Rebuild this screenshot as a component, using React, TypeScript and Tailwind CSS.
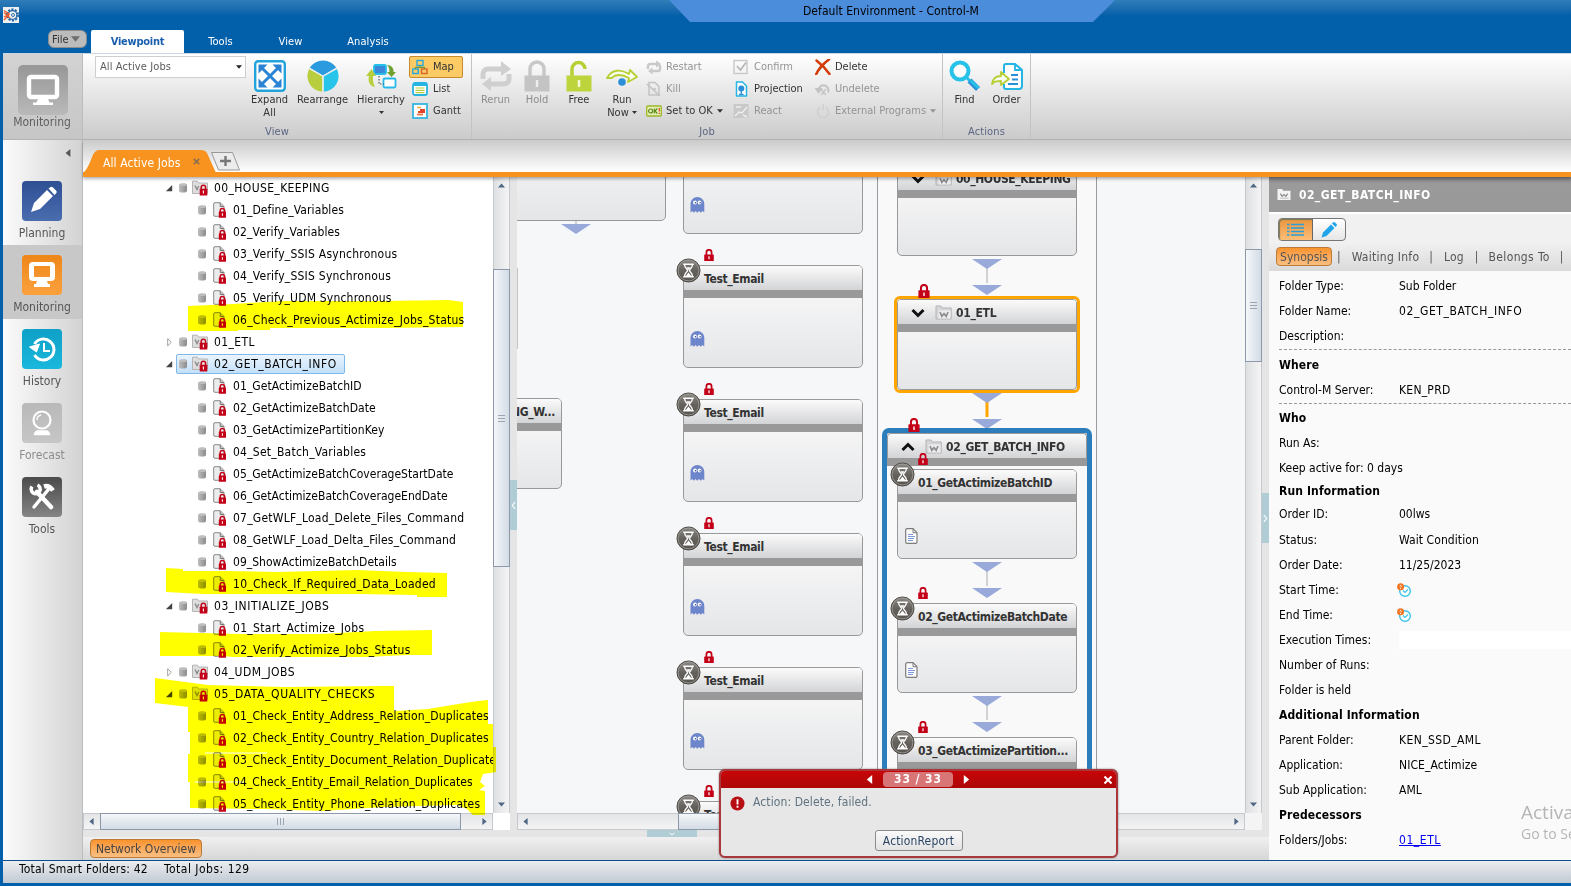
import React from 'react';

type Box = { className?: string };

/* ---------- small icons ---------- */

const Lock = ({ className = '' }: Box) => (
  <svg viewBox="0 0 10 12" className={className}>
    <path d="M2.4 6V3.4a2.6 2.6 0 0 1 5.2 0V6" fill="none" stroke="#c40018" strokeWidth="1.7" />
    <rect x="0.2" y="5.4" width="9.6" height="6.6" rx="0.6" fill="#c40018" />
    <path d="M5 7.2v3" stroke="#fff" strokeWidth="1.2" />
  </svg>
);

const Cylinder = () => (
  <svg viewBox="0 0 8 10" className="h-[10px] w-2 shrink-0">
    <defs>
      <linearGradient id="cyl" x1="0" x2="1">
        <stop offset="0" stopColor="#bdbdbd" />
        <stop offset="1" stopColor="#8c8c8c" />
      </linearGradient>
    </defs>
    <rect x="0" y="0.5" width="8" height="9" rx="2" fill="url(#cyl)" />
    <ellipse cx="4" cy="1.9" rx="3.6" ry="1.2" fill="#bebebe" />
  </svg>
);

const FolderLocked = () => (
  <svg viewBox="0 0 16 16" className="h-4 w-4 shrink-0">
    <path d="M0.5 3V1.2h5L6.5 3H15.5v10.5H0.5z" fill="#dedede" stroke="#b4b4b4" />
    <path d="M3 5.500l2 4 1.800-3.500" fill="none" stroke="#888" strokeWidth="1.300" />
    <path d="M9.200 9V7.500a2.200 2.200 0 0 1 4.400 0V9" fill="none" stroke="#c40018" strokeWidth="1.500" />
    <rect x="7.700" y="8.800" width="7.600" height="6.600" rx="0.500" fill="#c40018" />
    <path d="M11.400 10.600v2.800" stroke="#fff" strokeWidth="1.100" />
  </svg>
);

const DocLocked = () => (
  <svg viewBox="0 0 14 16" className="h-4 w-[14px] shrink-0">
    <path d="M2 0.700h5.200L11 4.500V14.300H2A1.200 1.200 0 0 1 0.700 13V2A1.200 1.200 0 0 1 2 0.700z" fill="#ececec" stroke="#8a8a8a" />
    <path d="M7.200 0.700v3.800H11" fill="#c4c4c4" stroke="#7a7a7a" />
    <path d="M7.200 10V8.600a2.200 2.200 0 0 1 4.400 0V10" fill="none" stroke="#c40018" strokeWidth="1.500" />
    <rect x="5.800" y="9.600" width="7.200" height="6.200" rx="0.500" fill="#c40018" />
    <path d="M9.400 11.200v2.600" stroke="#fff" strokeWidth="1.100" />
  </svg>
);

const FolderW = ({ className = '' }: Box) => (
  <svg viewBox="0 0 17 15" className={className}>
    <path d="M1 3V1h5l1 2h9.2v11H1z" fill="#d6d6d8" stroke="#b4b4b6" />
    <path d="M3.500 5.500h12v8h-12z" fill="#ededef" />
    <path d="M5 7l1.800 4.400L9 8.600l2.200 2.800L13 7" fill="none" stroke="#8f8f8f" strokeWidth="1.700" />
  </svg>
);

const Hourglass = ({ className = '' }: Box) => (
  <svg viewBox="0 0 26 26" className={className}>
    <defs>
      <linearGradient id="hg" x1="0" y1="0" x2="0" y2="1">
        <stop offset="0" stopColor="#8d8a86" />
        <stop offset="0.5" stopColor="#65615c" />
        <stop offset="1" stopColor="#57534e" />
      </linearGradient>
    </defs>
    <circle cx="13" cy="13" r="12" fill="url(#hg)" stroke="#4e4b47" />
    <circle cx="13" cy="13" r="10.8" fill="none" stroke="#a5a29e" strokeWidth="0.8" />
    <path d="M7.500 6.500h11M7.500 19.500h11M9 7c0 4 3 4.500 3 6s-3 2-3 6M17 7c0 4-3 4.500-3 6s3 2 3 6" fill="none" stroke="#fff" strokeWidth="1.400" />
    <path d="M10.600 9.500h4.800L13 12.500zM10 19l3-4 3 4z" fill="#fff" />
  </svg>
);

const Ghost = ({ className = '' }: Box) => (
  <svg viewBox="0 0 15 16" className={className}>
    <path d="M0.500 15.500V6.500a6.800 6.300 0 0 1 13.800 0v9l-1.800-1.500-1.700 1.700-1.800-1.700-1.700 1.700-1.700-1.700-1.700 1.700-1.600-1.700z" fill="#6c85cb" />
    <circle cx="5" cy="5.500" r="1.900" fill="#fff" />
    <circle cx="9.600" cy="5.500" r="1.900" fill="#fff" />
    <circle cx="5.500" cy="5.800" r="0.800" fill="#33498c" />
    <circle cx="10.100" cy="5.800" r="0.800" fill="#33498c" />
  </svg>
);

const DocIcon = ({ className = '' }: Box) => (
  <svg viewBox="0 0 13 16" className={className}>
    <path d="M2 0.700h6l4 4V14a1.300 1.300 0 0 1-1.300 1.300H2A1.300 1.300 0 0 1 0.700 14V2A1.300 1.300 0 0 1 2 0.700z" fill="#fcfcfd" stroke="#7c7c7c" strokeWidth="1.200" />
    <path d="M8 0.700v4h4" fill="none" stroke="#7c7c7c" />
    <path d="M3 6.500h5M3 8.500h7M3 10.500h6M3 12.500h5" stroke="#7d97dc" strokeWidth="1.200" />
  </svg>
);

const Tri = ({ dir, className = '' }: { dir: 'up' | 'down' | 'left' | 'right'; className?: string }) => {
  const d = { up: 'M0 8L5 2l5 6z', down: 'M0 2h10L5 8z', left: 'M8 0v10L2 5z', right: 'M2 0v10l6-5z' }[dir];
  return (
    <svg viewBox="0 0 10 10" className={`shrink-0 ${className}`}>
      <path d={d} fill="currentColor" />
    </svg>
  );
};

/* ---------- title and ribbon ---------- */

const AppLogo = () => (
  <svg viewBox="0 0 16 16" className="h-4 w-4">
    <rect width="16" height="16" fill="#f1f1f1" />
    <circle cx="9.500" cy="8" r="5.700" fill="none" stroke="#1b64a5" strokeWidth="1.600" strokeDasharray="2.200 1.380" />
    <circle cx="9.500" cy="8" r="4.400" fill="none" stroke="#1b64a5" strokeWidth="1.300" />
    <circle cx="10" cy="8" r="1.500" fill="none" stroke="#1b64a5" strokeWidth="0.900" />
    <path d="M1 3.500l5.500 3.500M6.500 7L1 13M1 5.500l6 5.500M1 10l5-3" fill="none" stroke="#ec5a2b" strokeWidth="1.300" />
  </svg>
);

const TitleBar = () => (
  <div className="relative h-[30px]">
    <div className="pt-[7px]"><AppLogo /></div>
    <div className="absolute left-[666px] top-0 h-[22px] w-[446px]">
      <svg viewBox="0 0 446 22" className="absolute inset-0 h-[22px] w-[446px]">
        <path d="M0 0h446l-22 22H21z" fill="#4b8ddb" />
      </svg>
      <div className="relative pr-[2px] text-center leading-[23px] tracking-[0.04px] text-black">Default Environment - Control-M</div>
    </div>
  </div>
);

const RibbonTabs = () => (
  <div className="flex h-[23px] text-[11px] leading-[23px] text-white">
    <div className="ml-[45px] flex h-[18px] w-[39px] items-center gap-[3px] rounded-[6px] border border-[#8d8d8d] bg-[#bcbcbc] pl-[3px] text-[#333]">
      File
      <Tri dir="down" className="h-[10px] w-[9px] text-[#6d6d6d]" />
    </div>
    <div className="ml-1 w-[93px] rounded-t-[2px] bg-white text-center font-bold tracking-[-0.25px] text-[#1a5fae]">Viewpoint</div>
    <div className="w-[73px] text-center tracking-[0.1px]">Tools</div>
    <div className="w-[67px] text-center tracking-[0.1px]">View</div>
    <div className="w-[88px] text-center tracking-[0.1px]">Analysis</div>
  </div>
);

const Big = ({ w, off, lines, children, arrow }: { w: string; off?: boolean; lines: string[]; children: React.ReactNode; arrow?: boolean }) => (
  <div className={`flex flex-col items-center pt-[6px] ${w} ${off ? 'text-[#8c8c8c]' : 'text-[#333]'}`}>
    <div className="mb-px flex h-[32px] items-center justify-center">{children}</div>
    {lines.map((l, i) => (
      <div key={l} className="flex items-center whitespace-nowrap leading-[13px]">
        {l}
        {i > 0 && l === 'Now' && <Tri dir="down" className="ml-[3px] h-[5px] w-[5px]" />}
      </div>
    ))}
    {arrow && <Tri dir="down" className="mt-1 h-[5px] w-[5px]" />}
  </div>
);

const Small = ({ off, label, on, children, arrow, gap = 'gap-1' }: { off?: boolean; on?: boolean; label: string; children: React.ReactNode; arrow?: boolean; gap?: string }) => (
  <div className={`flex h-[22px] items-center whitespace-nowrap border px-[2px] ${gap} ${on ? 'rounded-[2px] border-[#c78a2c] bg-[#fccb66]' : 'border-transparent'} ${off ? 'text-[#949494]' : 'text-[#333]'}`}>
    <svg viewBox="0 0 16 16" className="h-4 w-4 shrink-0">{children}</svg>
    <span className="pt-px">{label}</span>
    {arrow && <Tri dir="down" className="h-[6px] w-[6px]" />}
  </div>
);

const GroupLabel = ({ children }: { children: React.ReactNode }) => (
  <div className="absolute inset-x-0 bottom-0 text-center leading-[14px] tracking-[0.1px] text-[#5b6684]">{children}</div>
);

const Ribbon = () => (
  <div className="flex h-[87px] border-y border-t-[#c9d6e2] border-b-[#b5b5b5] bg-linear-to-b from-white to-[#cbcbcb] text-[11px]">
    <div className="flex w-[80px] flex-col items-center border-r border-[#b9bdc2] bg-linear-to-b from-[#d3d3d3] to-[#c6c6c6] pt-[11px]">
      <div className="flex h-[50px] w-[50px] items-center justify-center rounded-[5px] bg-linear-to-b from-[#979797] to-[#b9b9b9]">
        <svg viewBox="0 0 34 34" className="h-[34px] w-[34px]">
          <rect x="3" y="4" width="28" height="20" rx="2" fill="none" stroke="#fff" strokeWidth="4.400" />
          <path d="M12 26h10l1.500 3.500H27V32H7v-2.500h3.500z" fill="#fff" />
        </svg>
      </div>
      <div className="pr-px text-[12px] leading-[15px] text-[#606060]">Monitoring</div>
    </div>

    <div className="relative flex w-[389px] border-r border-[#c3c3c3]">
      <div className="ml-3 mt-[2px] flex h-[22px] w-[151px] items-center justify-between border border-[#cfcfcf] bg-white pl-1 pr-[3px] text-[#5c5c5c]">
        <span className="tracking-[0.1px]">All Active Jobs</span>
        <Tri dir="down" className="h-[6px] w-[6px] text-[#222]" />
      </div>
      <Big w="w-[47px]" lines={['Expand', 'All']}>
        <svg viewBox="0 0 32 32" className="h-8 w-8">
          <rect x="1.200" y="1.200" width="29.600" height="29.600" rx="3" fill="#fff" stroke="#22a3dc" strokeWidth="2.400" />
          <path d="M8 8l16 16M24 8L8 24" stroke="#2b83d3" strokeWidth="3" />
          <path d="M4.500 4.500h9l-9 9zM27.500 4.500h-9l9 9zM4.500 27.500h9l-9-9zM27.500 27.500h-9l9-9z" fill="#2b83d3" />
        </svg>
      </Big>
      <Big w="w-[59px]" lines={['Rearrange']}>
        <svg viewBox="0 0 32 32" className="h-8 w-8">
          <path d="M16 16L2.600 8A15.700 15.700 0 0 1 29.400 8z" fill="#2b9ade" />
          <path d="M16.600 16.500L29.900 8.900A15.700 15.700 0 0 1 16.600 31.700z" fill="#28c4ea" />
          <path d="M15.400 16.500L2.100 8.900A15.700 15.700 0 0 0 15.400 31.700z" fill="#b9ce3e" />
          <path d="M16 32V16L2.300 8.100M16 16l13.700-7.900" fill="none" stroke="#eee" strokeWidth="1.200" />
        </svg>
      </Big>
      <Big w="w-[58px]" lines={['Hierarchy']} arrow>
        <svg viewBox="0 0 32 32" className="h-8 w-8">
          <rect x="9" y="5" width="12" height="9" rx="1.500" fill="#3b87d8" stroke="#25c0ea" strokeWidth="1.800" />
          <rect x="18.500" y="18.500" width="12" height="9" rx="1.500" fill="#fff" stroke="#25b8ea" strokeWidth="1.800" />
          <path d="M14 16v8h5" fill="none" stroke="#555" strokeWidth="1.200" strokeDasharray="1.500 1.500" />
          <path d="M10 27C5 26 2.500 22 4 16H1l5.500-7L11 16H8c-.5 4 .5 8 2 11z" fill="#b9ce3e" />
          <path d="M22 5c4 0 7 3 6.500 7H31l-4.500 5-4.500-5h2.500c0-3-.5-5-2.500-7z" fill="#6f9f2f" />
        </svg>
      </Big>
      <div className="ml-[-1px] w-[54px] pt-[2px]">
        <Small label="Map" on gap="gap-[5px]">
          <rect x="5" y="1.500" width="6" height="5" fill="none" stroke="#25a8e0" strokeWidth="1.400" />
          <rect x="0.800" y="10" width="5.500" height="4.500" fill="none" stroke="#25a8e0" strokeWidth="1.400" />
          <rect x="9.500" y="10" width="5.500" height="4.500" fill="none" stroke="#d8662b" strokeWidth="1.400" />
          <path d="M8 7v2M3.500 10V8.300h9V10" fill="none" stroke="#7a9a35" strokeWidth="1.200" />
        </Small>
        <Small label="List" gap="gap-[5px]">
          <rect x="1" y="2" width="14" height="12" rx="2" fill="#fff" stroke="#25b4e4" strokeWidth="1.800" />
          <path d="M2 4h12" stroke="#25b4e4" strokeWidth="2" />
          <path d="M3.500 7h9M3.500 9.300h9M3.500 11.600h9" stroke="#b9ce3e" strokeWidth="1.200" />
        </Small>
        <Small label="Gantt" gap="gap-[5px]">
          <rect x="1" y="1" width="14" height="14" fill="#fff" stroke="#35b6e2" strokeWidth="1.800" />
          <path d="M5 4.500h4" stroke="#f5b042" strokeWidth="1.600" />
          <path d="M8 7h5M6 9h7" stroke="#e2432a" strokeWidth="1.800" />
          <path d="M5 11.500h6" stroke="#e8733a" strokeWidth="1.800" />
        </Small>
      </div>
      <GroupLabel>View</GroupLabel>
    </div>

    <div className="relative flex w-[471px] border-r border-[#c3c3c3]">
      <Big w="w-[47px]" off lines={['Rerun']}>
        <svg viewBox="0 0 32 32" className="h-8 w-8">
          <path d="M3 19v-5a5 5 0 0 1 5-5h13M29 14v5a5 5 0 0 1-5 5H10" fill="none" stroke="#cfcfcf" strokeWidth="5" />
          <path d="M21 1l10 8-10 7zM11 17L2 24l9 7z" fill="#cfcfcf" />
        </svg>
      </Big>
      <Big w="w-[36px]" off lines={['Hold']}>
        <svg viewBox="0 0 26 32" className="h-8 w-[26px]">
          <path d="M6 16V9a7 7 0 0 1 14 0v7" fill="none" stroke="#c8c8c8" strokeWidth="3.500" />
          <rect x="0.500" y="15.500" width="25" height="16" fill="#c4c4c4" />
          <path d="M13 20v7" stroke="#eee" strokeWidth="2.500" />
        </svg>
      </Big>
      <Big w="w-[48px]" lines={['Free']}>
        <svg viewBox="0 0 26 32" className="h-8 w-[26px]">
          <path d="M6 16V9a6.500 6.500 0 0 1 13 0" fill="none" stroke="#b7cf34" strokeWidth="3.500" />
          <rect x="0.500" y="15.500" width="25" height="16" fill="#bdd43c" />
          <path d="M13 20v7" stroke="#f4f9d6" strokeWidth="2.500" />
        </svg>
      </Big>
      <Big w="w-[38px]" lines={['Run', 'Now']}>
        <svg viewBox="0 0 34 32" className="h-8 w-[34px]">
          <path d="M2 18C7 9 16 9 24 14l1-4 7 7-9 5 1-4C17 14 10 14 7 18z" fill="#fbfdf0" stroke="#b7cf34" strokeWidth="1.800" strokeLinejoin="round" />
          <circle cx="17" cy="22" r="3.800" fill="#2b8fd8" />
        </svg>
      </Big>
      <div className="ml-[2px] w-[87px] pt-[2px]">
        <Small label="Restart" off>
          <path d="M2 10V7a2 2 0 0 1 2-2h6M14 6v4a2 2 0 0 1-2 2H6" fill="none" stroke="#c9c9c9" strokeWidth="2.400" />
          <path d="M10 1.500l5 3.500-5 3.500zM6.500 8.500L2 12l4.500 3.500z" fill="#c9c9c9" />
        </Small>
        <Small label="Kill" off>
          <path d="M3 1.500h6l4 4V14H3z" fill="none" stroke="#c4c4c4" strokeWidth="1.500" />
          <path d="M1 3l13 12M6 8h4" stroke="#c4c4c4" strokeWidth="1.700" />
        </Small>
        <Small label="Set to OK" arrow>
          <rect x="0.700" y="3" width="14.600" height="10" rx="1" fill="#e6efb4" stroke="#9db82b" strokeWidth="1.300" />
          <circle cx="4.600" cy="8" r="2" fill="none" stroke="#5d8a1c" strokeWidth="1.200" />
          <path d="M8.300 5.500v5M11.300 5.500L9 8l2.300 2.500" fill="none" stroke="#5d8a1c" strokeWidth="1.200" />
          <path d="M13.300 5v3.500M13.300 9.700v1.300" stroke="#e0422a" strokeWidth="1.200" />
        </Small>
      </div>
      <div className="w-[82px] pt-[2px]">
        <Small label="Confirm" off gap="gap-[5px]">
          <rect x="1" y="1.500" width="13" height="13" fill="none" stroke="#c8c8c8" strokeWidth="1.400" />
          <path d="M4 7l3.500 4L13 3.500" fill="none" stroke="#b8b8b8" strokeWidth="1.800" />
        </Small>
        <Small label="Projection" gap="gap-[5px]">
          <path d="M3.500 1h6l4 4v10h-10z" fill="#fff" stroke="#25b4e4" strokeWidth="1.500" strokeLinejoin="round" />
          <circle cx="8.300" cy="7.500" r="3" fill="#2b8fd8" />
          <path d="M8.300 10v4M6 13.500h4.600" stroke="#2b8fd8" strokeWidth="1.300" />
        </Small>
        <Small label="React" off gap="gap-[5px]">
          <rect x="0.500" y="1" width="15" height="14" fill="#c9c9c9" />
          <path d="M2 13l4-4 3 1 5-6M10 12l4 2M3 4h5" fill="none" stroke="#eee" strokeWidth="1.400" />
        </Small>
      </div>
      <div className="w-[124px] pt-[2px]">
        <Small label="Delete">
          <path d="M1.500 1.500C6 5 11 10 14.500 15M14 0.500C9 4 4 9 1 15.500" stroke="#d63c0a" strokeWidth="2.500" strokeLinecap="round" />
        </Small>
        <Small label="Undelete" off>
          <path d="M3.500 9a5 5 0 1 1 9.500 2.500" fill="none" stroke="#c4c4c4" strokeWidth="2" />
          <path d="M0.500 7.500h6L3.500 12zM6 8l5 6M11 8l-5 6" fill="#c4c4c4" stroke="#c4c4c4" strokeWidth="1.200" />
        </Small>
        <Small label="External Programs" off arrow>
          <path d="M5 4.500a5.500 5.500 0 1 0 6 0M8 1v6" fill="none" stroke="#d0d0d0" strokeWidth="1.700" />
        </Small>
      </div>
      <GroupLabel>Job</GroupLabel>
    </div>

    <div className="relative flex w-[88px] border-r border-[#c3c3c3]">
      <Big w="w-[43px]" lines={['Find']}>
        <svg viewBox="0 0 32 32" className="h-8 w-8">
          <circle cx="11" cy="11" r="8.500" fill="#fdfdfd" stroke="#27c2e8" strokeWidth="4" />
          <path d="M18 18l4 4" stroke="#27c2e8" strokeWidth="3" />
          <path d="M20.500 20.500l8.500 8.500" stroke="#2b8fd8" strokeWidth="5.500" />
          <path d="M21.500 20.500l8 7.500" stroke="#27c2e8" strokeWidth="3" />
        </svg>
      </Big>
      <Big w="w-[41px]" lines={['Order']}>
        <svg viewBox="0 0 32 32" className="h-8 w-8">
          <path d="M13 13V6a2 2 0 0 1 2-2h9l7 6v16a3 3 0 0 1-3 3H15a2 2 0 0 1-2-2v-3" fill="#fff" stroke="#25b4e4" strokeWidth="2" />
          <path d="M24 4v6h7" fill="none" stroke="#25b4e4" strokeWidth="1.800" />
          <path d="M20 15h7M21 19.500h6M17 24h10" stroke="#2b8fd8" strokeWidth="1.800" />
          <path d="M1 24c1-7 6-8 9-8v-4l8 7-8 6v-4c-4 0-6 0-9 3z" fill="#fbfdf0" stroke="#b7cf34" strokeWidth="1.800" strokeLinejoin="round" />
        </svg>
      </Big>
      <GroupLabel>Actions</GroupLabel>
    </div>
  </div>
);

/* ---------- navigation rail ---------- */

const railItems: { label: string; tile: string; text: string; active?: boolean; icon: React.ReactNode }[] = [
  {
    label: 'Planning', tile: 'bg-linear-to-b from-[#2f4f93] to-[#4a6db0]', text: 'text-[#555]',
    icon: <path d="M9 31l3-9L25 9l6 6-13 13zM26.500 7.500l1.500-1a2 2 0 0 1 3 0l3 3a2 2 0 0 1 0 3l-1.500 1.500z" fill="#fff" />,
  },
  {
    label: 'Monitoring', tile: 'bg-linear-to-b from-[#ee8618] to-[#fba13c]', text: 'text-[#555]', active: true,
    icon: <path d="M11 7h18a4 4 0 0 1 4 4v11a4 4 0 0 1-4 4h-4l1 3h2v3H12v-3h2l1-3h-4a4 4 0 0 1-4-4V11a4 4 0 0 1 4-4zm1 4v11h16V11z" fill="#fff" fillRule="evenodd" />,
  },
  {
    label: 'History', tile: 'bg-linear-to-b from-[#0fa0c8] to-[#19b8dc]', text: 'text-[#555]',
    icon: (
      <g fill="none" stroke="#fff">
        <path d="M12.500 15a10.500 10.500 0 1 1 0 11" strokeWidth="3" />
        <path d="M22 14v8h6" strokeWidth="2" />
        <path d="M7.500 18l10-3-3 8z" fill="#fff" strokeWidth="1" />
      </g>
    ),
  },
  {
    label: 'Forecast', tile: 'bg-linear-to-b from-[#b9b9b9] to-[#c6c6c6]', text: 'text-[#8c8c8c]',
    icon: (
      <g fill="none" stroke="#fff">
        <circle cx="20" cy="17" r="8.500" strokeWidth="2.200" />
        <path d="M15 17a5 5 0 0 1 4-5" strokeWidth="1.300" />
        <path d="M15 27.500h10q3 1 3 4.500H12q0-3.500 3-4.500z" fill="#fff" strokeWidth="0.500" />
      </g>
    ),
  },
  {
    label: 'Tools', tile: 'bg-linear-to-b from-[#4b4b4b] to-[#858585]', text: 'text-[#555]',
    icon: (
      <g fill="none" stroke="#fff" strokeLinecap="round">
        <path d="M15 15l14 15" strokeWidth="4.500" />
        <path d="M12 30l14-17" strokeWidth="3.500" />
        <path d="M10 9.500a4.500 4.500 0 1 0 5.500-1.500" strokeWidth="3.500" strokeLinecap="butt" />
        <path d="M22 9.500c3-1 6 0 9 4" strokeWidth="4.500" strokeLinecap="butt" />
      </g>
    ),
  },
];

const Rail = () => (
  <div className="flex w-[80px] shrink-0 flex-col border-r border-[#b9bdc2] bg-linear-to-r from-[#fbfbfb] to-[#d3d3d3]">
    <div className="flex h-[31px] justify-end pr-[10px] pt-[8px]">
      <Tri dir="left" className="h-[10px] w-[8px] text-[#555]" />
    </div>
    {railItems.map((r) => (
      <div key={r.label} className={`flex h-[74px] flex-col items-center pr-px pt-[10px] ${r.active ? 'bg-[#c8c8c8]' : ''}`}>
        <svg viewBox="0 0 40 40" className={`h-10 w-10 rounded-[4px] ${r.tile}`}>{r.icon}</svg>
        <div className={`pt-[5px] text-[12px] leading-[15px] ${r.text}`}>{r.label}</div>
      </div>
    ))}
  </div>
);

/* ---------- tab strip ---------- */

const TabStrip = () => (
  <div className="h-[37px] border-b-[5px] border-[#f7931e] bg-linear-to-b from-[#cbcbcb] to-white pt-[10px]">
    <div className="relative flex h-[22px] items-center">
      <svg viewBox="0 0 160 23" className="absolute left-0 top-0 h-[23px] w-[160px]">
        <path d="M0 23C6 18 8 8 11 3q2-3 5-3h102q4 0 6 3l9 20z" fill="#f7931e" />
        <path d="M128.500 2.500h21l7 17.500h-21z" fill="#ececec" stroke="#999" />
        <path d="M137 11h11M142.500 6v10" stroke="#777" strokeWidth="2.400" />
      </svg>
      <span className="relative ml-[20px] mt-[3px] text-[12px] tracking-[0.1px] text-white">All Active Jobs</span>
      <svg viewBox="0 0 8 8" className="relative ml-[13px] h-[7px] w-[7px]"><path d="M1 1l6 6M7 1L1 7" stroke="#8a6f51" strokeWidth="1.800" /></svg>
    </div>
  </div>
);

/* ---------- scroll bars ---------- */

const VScroll = ({ lead, thumb }: { lead: string; thumb: string }) => (
  <div className="flex w-[17px] shrink-0 flex-col items-center border-x border-[#c5c9cd] bg-linear-to-r from-[#dfe0e2] to-[#f4f4f5]">
    <Tri dir="up" className="mt-[5px] h-[7px] w-[7px] text-[#4c6684]" />
    <div className={lead} />
    <div className={`flex w-[17px] shrink-0 flex-col items-center justify-center gap-[2px] border border-[#8b99a8] bg-linear-to-r from-[#f5f7f9] to-[#d3dbe5] ${thumb}`}>
      <div className="h-px w-[7px] bg-[#9aa5b1]" /><div className="h-px w-[7px] bg-[#9aa5b1]" /><div className="h-px w-[7px] bg-[#9aa5b1]" />
    </div>
    <Tri dir="down" className="mb-[5px] mt-auto h-[7px] w-[7px] text-[#4c6684]" />
  </div>
);

const HScroll = ({ lead, thumb, width }: { lead: string; thumb: string; width: string }) => (
  <div className={`flex h-[17px] shrink-0 items-center border border-[#c5c9cd] bg-linear-to-b from-[#e4e5e6] to-[#f4f4f5] ${width}`}>
    <Tri dir="left" className="ml-[4px] h-[7px] w-[7px] text-[#4c6684]" />
    <div className={lead} />
    <div className={`flex h-[17px] shrink-0 items-center justify-center gap-[2px] border border-[#8b99a8] bg-linear-to-b from-[#f5f7f9] to-[#d3dbe5] ${thumb}`}>
      <div className="h-[7px] w-px bg-[#9aa5b1]" /><div className="h-[7px] w-px bg-[#9aa5b1]" /><div className="h-[7px] w-px bg-[#9aa5b1]" />
    </div>
    <Tri dir="right" className="ml-auto mr-[4px] h-[7px] w-[7px] text-[#4c6684]" />
  </div>
);

/* ---------- tree ---------- */

const WIDE = 'tracking-[0.24px]';
const LONG = 'tracking-[0.15px]';
const CAPS = 'tracking-[0.57px]';
const NONE = 'tracking-[0.03px]';

const tree: [string, 'open' | 'closed' | 'job', string][] = [
  ['00_HOUSE_KEEPING', 'open', 'tracking-[0.38px]'],
  ['01_Define_Variables', 'job', 'tracking-[0.1px]'],
  ['02_Verify_Variables', 'job', 'tracking-[0.15px]'],
  ['03_Verify_SSIS Asynchronous', 'job', WIDE],
  ['04_Verify_SSIS Synchronous', 'job', WIDE],
  ['05_Verify_UDM Synchronous', 'job', 'tracking-[0.2px]'],
  ['06_Check_Previous_Actimize_Jobs_Status', 'job', WIDE],
  ['01_ETL', 'closed', 'tracking-[0.4px]'],
  ['02_GET_BATCH_INFO', 'open', CAPS],
  ['01_GetActimizeBatchID', 'job', 'tracking-[0.08px]'],
  ['02_GetActimizeBatchDate', 'job', 'tracking-[0.06px]'],
  ['03_GetActimizePartitionKey', 'job', 'tracking-[0.1px]'],
  ['04_Set_Batch_Variables', 'job', WIDE],
  ['05_GetActimizeBatchCoverageStartDate', 'job', NONE],
  ['06_GetActimizeBatchCoverageEndDate', 'job', NONE],
  ['07_GetWLF_Load_Delete_Files_Command', 'job', 'tracking-[0.23px]'],
  ['08_GetWLF_Load_Delta_Files_Command', 'job', 'tracking-[0.19px]'],
  ['09_ShowActimizeBatchDetails', 'job', NONE],
  ['10_Check_If_Required_Data_Loaded', 'job', 'tracking-[0.28px]'],
  ['03_INITIALIZE_JOBS', 'open', CAPS],
  ['01_Start_Actimize_Jobs', 'job', 'tracking-[0.3px]'],
  ['02_Verify_Actimize_Jobs_Status', 'job', 'tracking-[0.3px]'],
  ['04_UDM_JOBS', 'closed', 'tracking-[0.48px]'],
  ['05_DATA_QUALITY_CHECKS', 'open', 'tracking-[0.62px]'],
  ['01_Check_Entity_Address_Relation_Duplicates', 'job', LONG],
  ['02_Check_Entity_Country_Relation_Duplicates', 'job', LONG],
  ['03_Check_Entity_Document_Relation_Duplicates', 'job', LONG],
  ['04_Check_Entity_Email_Relation_Duplicates', 'job', 'tracking-[0.08px]'],
  ['05_Check_Entity_Phone_Relation_Duplicates', 'job', 'tracking-[0.18px]'],
];

const TreeRow = ({ name, kind, track }: { name: string; kind: string; track: string }) => {
  if (kind === 'job')
    return (
      <div className="flex h-[22px] items-center pl-[115px]">
        <Cylinder />
        <div className="w-[7px] shrink-0" />
        <DocLocked />
        <span className={`whitespace-nowrap pl-[6px] ${track}`}>{name}</span>
      </div>
    );
  const selected = name === '02_GET_BATCH_INFO';
  return (
    <div className="flex h-[22px] items-center pl-[82px]">
      <svg viewBox="0 0 10 10" className="h-[9px] w-[9px] shrink-0">
        {kind === 'open' ? <path d="M8 1v7H1z" fill="#444" /> : <path d="M3 0.800v8l4-4z" fill="#fff" stroke="#999" />}
      </svg>
      <div className={`ml-[2px] flex h-[20px] items-center rounded-[2px] border pl-[2px] pr-[7px] ${selected ? 'border-[#7fb8ea] bg-linear-to-b from-[#eaf4fd] to-[#c3e0fa]' : 'border-transparent'}`}>
        <Cylinder />
        <div className="w-[5px]" />
        <FolderLocked />
        <span className={`whitespace-nowrap pl-[6px] ${track}`}>{name}</span>
      </div>
    </div>
  );
};

const Marker = () => (
  <svg viewBox="0 0 427 640" className="pointer-events-none absolute left-0 top-0 h-[640px] w-[427px] mix-blend-multiply">
    <g fill="#ffff00">
      <path d="M105 129L150 127 200 124 300 124 365 123 380 125V150L300 151 187 151 187 153 155 153 155 154H105z" />
      <path d="M83 391l17 1v2h44l50 1 80-2 50 2 40 1v24l-30 0v-2l-60-1H120l-37-2z" />
      <path d="M77 455l80 2 80 0 55-3 57-1v25h-25l-40 2H150l-10-1H77z" />
      <path d="M72 501L125 508 200 510 300 509 311 509V534L345 532 375 527 395 524 405 523V547H410V570H413V595L400 597 397 605 402 609 396 613 402 614V638H390L384 632 374 628 300 630 240 634 180 632 107 631V605H105V577H107V555H105V530L72 526z" />
    </g>
    <path d="M122 576h62M112 605h50" stroke="#fff" strokeWidth="1" />
  </svg>
);

const TreePane = () => (
  <div className="flex h-[653px] w-[427px] shrink-0 flex-col bg-white">
    <div className="flex h-[636px]">
      <div className="relative w-[410px] shrink-0 overflow-hidden text-black">
        {tree.map(([n, k, t], i) => <TreeRow key={i} name={n} kind={k} track={t} />)}
      </div>
      <VScroll lead="h-[80px] shrink-0" thumb="h-[298px]" />
    </div>
    <HScroll width="w-[410px]" lead="w-[5px] shrink-0" thumb="w-[361px]" />
  </div>
);

/* ---------- diagram ---------- */

const CardHead = 'bg-linear-to-b from-[#fbfbfb] to-[#d3d4d6]';

const JobCard = ({ pos, size, title, pad = 'pl-[20px]', icon }: { pos: string; size: string; title: string; pad?: string; icon?: React.ReactNode }) => (
  <div className={`absolute flex flex-col overflow-hidden rounded-[5px] border border-[#999] bg-linear-to-b from-[#fbfbfb] to-[#e5e6e8] ${pos} ${size}`}>
    <div className={`h-[24px] shrink-0 whitespace-nowrap font-bold leading-[27px] tracking-[-0.36px] text-[#333] ${CardHead} ${pad}`}>{title}</div>
    <div className="h-[8px] shrink-0 bg-[#999]" />
    {icon}
  </div>
);

const Chevron = ({ up }: { up?: boolean }) => (
  <svg viewBox="0 0 14 10" className="h-[10px] w-[14px]">
    <path d={up ? 'M1.500 8L7 2.500 12.500 8' : 'M1.500 2L7 7.500 12.500 2'} fill="none" stroke="#111" strokeWidth="3" />
  </svg>
);

const FolderTitle = ({ name, up }: { name: string; up?: boolean }) => (
  <div className="flex h-full items-center pt-[1px]">
    <Chevron up={up} />
    <FolderW className="ml-[10px] h-[15px] w-[17px]" />
    <span className="pl-[4px] leading-[18px]">{name}</span>
  </div>
);

const Link = ({ pos, hot }: { pos: string; hot?: boolean }) => (
  <svg viewBox="0 0 30 36" className={`absolute left-[455px] h-[36px] w-[30px] ${pos}`}>
    <path d="M15 8v16" stroke={hot ? '#ffa500' : '#aaa'} strokeWidth={hot ? 3 : 1} />
    <path d="M0 0h30L15 10zM0 26h30L15 36z" fill="#98a9da" />
  </svg>
);

const emails = ['top-[-46px]', 'top-[88px]', 'top-[222px]', 'top-[356px]', 'top-[490px]', 'top-[624px]'];
const emailLocks = ['top-[-62px]', 'top-[72px]', 'top-[206px]', 'top-[340px]', 'top-[474px]', 'top-[608px]'];
const emailGlass = ['top-[-53px]', 'top-[81px]', 'top-[215px]', 'top-[349px]', 'top-[483px]', 'top-[617px]'];

const batchJobs = [
  { name: '01_GetActimizeBatchID', card: 'top-[292px]', lock: 'top-[276px]', glass: 'top-[285px]' },
  { name: '02_GetActimizeBatchDate', card: 'top-[426px]', lock: 'top-[410px]', glass: 'top-[419px]' },
  { name: '03_GetActimizePartition...', card: 'top-[560px]', lock: 'top-[544px]', glass: 'top-[553px]' },
];

const Canvas = () => (
  <div className="relative h-[636px] w-[728px] shrink-0 overflow-hidden bg-[#f6f7f8]">
    <div className="absolute left-0 top-[91px] h-[81px] w-px bg-[#c4c4c4]" />
    <JobCard pos="left-[-31px] top-[-59px]" size="h-[103px] w-[180px]" title="" />
    <svg viewBox="0 0 30 13" className="absolute left-[44px] top-[44px] h-[13px] w-[30px]">
      <path d="M15 0v4" stroke="#aaa" /><path d="M0 3h30L15 13z" fill="#98a9da" />
    </svg>
    <JobCard pos="left-[-135px] top-[221px]" size="h-[91px] w-[180px]" title="02_STAGING_W..." pad="text-right pr-[6px]" />

    {emails.map((t) => (
      <JobCard
        key={t} pos={`left-[166px] ${t}`} size="h-[103px] w-[180px]" title="Test_Email"
        icon={<Ghost className="ml-[6px] mt-[33px] h-4 w-[15px]" />}
      />
    ))}
    {emailLocks.map((t) => <Lock key={t} className={`absolute left-[187px] h-[12px] w-[10px] ${t}`} />)}
    {emailGlass.map((t) => <Hourglass key={t} className={`absolute left-[159px] h-[25px] w-[25px] ${t}`} />)}

    <div className="absolute left-[360px] top-0 h-[636px] w-[220px] border-x border-[#9b9b9b] bg-[#f9f9fa]" />

    <div className="absolute left-[380px] top-[-12px] flex h-[91px] w-[180px] flex-col overflow-hidden rounded-[5px] border border-[#999] bg-linear-to-b from-[#fbfbfb] to-[#e5e6e8]">
      <div className={`h-[24px] pl-[13px] font-bold tracking-[-0.4px] text-[#333] ${CardHead}`}><FolderTitle name="00_HOUSE_KEEPING" /></div>
      <div className="h-[8px] bg-[#999]" />
    </div>
    <Link pos="top-[82px]" />

    <div className="absolute left-[377px] top-[119px] h-[97px] w-[186px] rounded-[6px] border-[3px] border-[#ffa500] bg-white">
      <div className="flex h-[91px] w-[180px] flex-col overflow-hidden rounded-[4px] border border-[#999] bg-linear-to-b from-[#fbfbfb] to-[#e5e6e8]">
        <div className={`h-[24px] pl-[13px] font-bold tracking-[-0.3px] text-[#333] ${CardHead}`}><FolderTitle name="01_ETL" /></div>
        <div className="h-[8px] bg-[#999]" />
      </div>
    </div>
    <Lock className="absolute left-[401px] top-[107px] h-[14px] w-[12px]" />
    <Link pos="top-[216px]" hot />

    <div className="absolute left-[365px] top-[251px] h-[420px] w-[210px] rounded-[7px] border-[5px] border-[#2c7dbb] bg-[#f9f9fa]">
      <div className={`h-[25px] rounded-t-[4px] border border-b-0 border-[#999] pl-[13px] font-bold tracking-[-0.32px] text-[#333] ${CardHead}`}><FolderTitle name="02_GET_BATCH_INFO" up /></div>
      <div className="h-[8px] bg-[#999]" />
    </div>
    <Lock className="absolute left-[391px] top-[241px] h-[14px] w-[12px]" />

    {batchJobs.map((j) => (
      <React.Fragment key={j.name}>
        <JobCard
          pos={`left-[380px] ${j.card}`} size="h-[90px] w-[180px]" title={j.name}
          icon={<DocIcon className="ml-[7px] mt-[26px] h-4 w-[13px]" />}
        />
        <Lock className={`absolute left-[401px] h-[12px] w-[10px] ${j.lock}`} />
        <Hourglass className={`absolute left-[373px] h-[25px] w-[25px] ${j.glass}`} />
      </React.Fragment>
    ))}
    <Link pos="top-[385px]" />
    <Link pos="top-[519px]" />
  </div>
);

const CanvasPane = () => (
  <div className="flex h-[653px] w-[745px] shrink-0 flex-col bg-[#f4f4f4]">
    <div className="flex h-[636px]">
      <Canvas />
      <VScroll lead="h-[60px] shrink-0" thumb="h-[113px]" />
    </div>
    <HScroll width="w-[728px]" lead="w-[149px] shrink-0" thumb="w-[240px]" />
  </div>
);

/* ---------- error notice ---------- */

const Toast = () => (
  <div className="absolute left-[719px] top-[769px] flex h-[89px] w-[399px] flex-col overflow-hidden rounded-[6px] border-2 border-[#a8383c] bg-[#e7e7e7] shadow-[0_0_2px_#777]">
    <div className="flex h-[17px] items-center bg-linear-to-b from-[#c80507] to-[#ad0709] text-white">
      <Tri dir="left" className="ml-[144px] h-[9px] w-[9px]" />
      <div className="ml-[9px] h-[15px] w-[70px] rounded-[4px] bg-[#d87577] text-center text-[12px] font-bold leading-[14px] tracking-[0.9px]">33 / 33</div>
      <Tri dir="right" className="ml-[9px] h-[9px] w-[9px]" />
      <svg viewBox="0 0 8 8" className="ml-auto mr-[4px] h-2 w-2"><path d="M0.500 0.500l7 7M7.500 0.500l-7 7" stroke="#fff" strokeWidth="2" /></svg>
    </div>
    <div className="flex items-start pl-[9px] pt-[7px] text-[#5f7380]">
      <svg viewBox="0 0 16 16" className="mt-[1px] h-[15px] w-[15px]">
        <circle cx="8" cy="8" r="7.500" fill="#b70e14" />
        <path d="M8 3.500v5.500M8 10.500v2" stroke="#fff" strokeWidth="2" />
      </svg>
      <span className="ml-[8px] leading-[15px] tracking-[0.1px]">Action: Delete, failed.</span>
    </div>
    <div className="mt-auto flex justify-center pb-[5px]">
      <div className="h-[21px] w-[88px] rounded-[3px] border border-[#8b8b8b] bg-linear-to-b from-[#fafafa] to-[#e3e3e3] text-center leading-[20px] tracking-[0.15px] text-[#2b4565]">ActionReport</div>
    </div>
  </div>
);

/* ---------- details ---------- */

const TimeIcon = () => (
  <svg viewBox="0 0 14 14" className="-ml-[2px] h-[14px] w-[14px]">
    <circle cx="8" cy="8" r="5.300" fill="#fff" stroke="#3cc3e8" strokeWidth="1.400" />
    <path d="M6 7.500l2 2 3-3" fill="none" stroke="#3cc3e8" strokeWidth="1.200" />
    <circle cx="3.600" cy="3.800" r="3.500" fill="#f07522" />
    <path d="M2.700 3q1-1.300 1.800 0 0 .7-.9 1.200M3.600 5v1" fill="none" stroke="#fff" strokeWidth="0.900" />
  </svg>
);

const Field = ({ k, children, h = 'h-[25px]' }: { k: string; children?: React.ReactNode; h?: string }) => (
  <div className={`flex items-center ${h}`}>
    <span className="w-[120px] shrink-0 whitespace-nowrap">{k}</span>
    {children}
  </div>
);

const Head = ({ children, h = 'h-[25px]' }: { children: React.ReactNode; h?: string }) => (
  <div className={`flex items-center font-bold tracking-[0.13px] ${h}`}>{children}</div>
);

const Details = () => (
  <div className="relative flex w-[302px] shrink-0 flex-col overflow-hidden bg-[#fafafa]">
    <div className="flex h-[35px] items-center bg-linear-to-b from-[#828282] via-[#9a9a9a] via-20% to-[#999] pl-[7px] font-bold tracking-[0.42px] text-white">
      <svg viewBox="0 0 16 14" className="h-[13px] w-[16px]">
        <path d="M1 3V1h5l1 2h8v10H1z" fill="#f3f3f3" />
        <path d="M4 6l2 3 2-2 2 2 2-3" fill="none" stroke="#888" strokeWidth="1.200" />
        <path d="M4 11h9" stroke="#bbb" />
      </svg>
      <span className="pl-[7px]">02_GET_BATCH_INFO</span>
    </div>
    <div className="flex h-[59px] flex-col border-t-2 border-white bg-linear-to-b from-[#f1f1f1] from-50% to-[#dadada]">
      <div className="ml-[9px] mt-[4px] flex h-[23px] w-[68px] rounded-[4px] border border-[#777] bg-linear-to-b from-white to-[#e6e6e6]">
        <div className="flex w-[34px] items-center justify-center rounded-l-[3px] border-r border-[#666] bg-linear-to-b from-[#e9953c] to-[#fdbe77] shadow-[inset_1px_1px_1px_#775]">
          <svg viewBox="0 0 17 13" className="h-[13px] w-[17px]"><path d="M0 1.500h2.500M4 1.500h13M0 5h2.500M4 5h13M0 8.500h2.500M4 8.500h13M0 12h2.500M4 12h13" stroke="#2b9fd9" strokeWidth="1.600" /></svg>
        </div>
        <div className="flex flex-1 items-center justify-center">
          <svg viewBox="0 0 16 16" className="h-4 w-4"><path d="M0.500 15.500l1.500-5L10 2.500l3.500 3.500-8 8zM11 1.500L12 .5q1-.8 2 0l1.500 1.500q.8 1 0 2l-1 1z" fill="#21a5ea" /></svg>
        </div>
      </div>
      <div className="mt-[6px] flex items-center whitespace-nowrap pl-[7px] text-[#555]">
        <div className="h-[19px] w-[56px] rounded-[4px] border border-[#bb7a35] bg-linear-to-b from-[#f8932a] to-[#fbbf80] text-center leading-[18px]">Synopsis</div>
        <span className="pl-[5px]">|</span>
        <span className="ml-[11px] tracking-[0.28px]">Waiting Info</span>
        <span className="ml-[10px]">|</span>
        <span className="ml-[11px] tracking-[0.2px]">Log</span>
        <span className="ml-[11px]">|</span>
        <span className="ml-[10px] tracking-[0.38px]">Belongs To</span>
        <span className="ml-[10px]">|</span>
      </div>
    </div>
    <div className="relative flex flex-col pl-[10px] pt-[2px] text-black">
      <Field k="Folder Type:">Sub Folder</Field>
      <Field k="Folder Name:"><span className="tracking-[0.6px]">02_GET_BATCH_INFO</span></Field>
      <Field k="Description:" />
      <div className="mb-[2px] mt-[1px] border-t border-dashed border-[#999]" />
      <Head>Where</Head>
      <Field k="Control-M Server:"><span className="tracking-[0.25px]">KEN_PRD</span></Field>
      <div className="my-[1px] border-t border-dashed border-[#999]" />
      <Head>Who</Head>
      <Field k="Run As:" />
      <Field k="Keep active for: 0 days" />
      <Head h="h-[21px]">Run Information</Head>
      <Field k="Order ID:" h="h-[26px]">00lws</Field>
      <Field k="Status:"><span className="tracking-[0.08px]">Wait Condition</span></Field>
      <Field k="Order Date:">11/25/2023</Field>
      <Field k="Start Time:"><TimeIcon /></Field>
      <Field k="End Time:"><TimeIcon /></Field>
      <Field k="Execution Times:"><div className="h-[18px] flex-1 bg-white" /></Field>
      <Field k="Number of Runs:" />
      <Field k="Folder is held" />
      <Head>Additional Information</Head>
      <Field k="Parent Folder:"><span className="tracking-[0.4px]">KEN_SSD_AML</span></Field>
      <Field k="Application:"><span className="tracking-[0.08px]">NICE_Actimize</span></Field>
      <Field k="Sub Application:">AML</Field>
      <Head>Predecessors</Head>
      <Field k="Folders/Jobs:"><a className="tracking-[0.55px] text-[#0000ee] underline">01_ETL</a></Field>
    </div>
    <div className="absolute left-[252px] top-[622px] whitespace-nowrap font-['Open_Sans',sans-serif] text-[#b5b5b5]">
      <div className="text-[19px] leading-[26px]">Activate Windows</div>
      <div className="text-[14px] leading-[18px]">Go to Settings to activate Windows.</div>
    </div>
  </div>
);

/* ---------- page ---------- */

const Handle = ({ side, open }: { side: string; open: 'left' | 'right' }) => (
  <div className={`flex w-[7px] shrink-0 flex-col bg-[#e5e5e5] ${side}`}>
    <div className="flex h-[50px] items-center justify-center bg-[#b0ccd5]">
      <svg viewBox="0 0 6 10" className="h-[9px] w-[5px]">
        <path d={open === 'left' ? 'M5 1L1.500 5 5 9' : 'M1 1l3.500 4L1 9'} fill="none" stroke="#fff" strokeWidth="1.300" />
      </svg>
    </div>
  </div>
);

export default function App() {
  return (
    <div className="relative flex h-[886px] w-[1571px] flex-col overflow-hidden bg-[#025fa9] font-['DejaVu_Sans_Condensed','Noto_Sans',sans-serif] text-[12px]">
      <div className="flex min-h-0 flex-1 flex-col bg-linear-to-b from-[#2f7db8] to-[#025fa9] to-[16px] pl-[3px]">
        <TitleBar />
        <RibbonTabs />
        <Ribbon />
        <div className="flex h-[720px]">
          <Rail />
          <div className="flex w-[1488px] flex-col">
            <div className="relative z-10 shadow-[0_2px_3px_rgba(0,0,0,0.3)]"><TabStrip /></div>
            <div className="flex h-[683px]">
              <div className="flex w-[1186px] shrink-0 flex-col">
                <div className="flex">
                  <div className="relative">
                    <TreePane />
                    <Marker />
                  </div>
                  <Handle side="pt-[303px]" open="left" />
                  <CanvasPane />
                  <Handle side="pt-[316px]" open="right" />
                </div>
                <div className="flex h-[7px] bg-[#e5e5e5] pl-[564px]">
                  <div className="flex w-[50px] items-center justify-center bg-[#b0ccd5]">
                    <svg viewBox="0 0 8 5" className="h-[4px] w-[8px]"><path d="M1 1l3 2.500L7 1" fill="none" stroke="#fff" strokeWidth="1.200" /></svg>
                  </div>
                </div>
                <div className="h-[23px] bg-linear-to-b from-[#f0f0f0] to-[#d6d6d6] pl-[7px] pt-[2px]">
                  <div className="h-[19px] w-[112px] rounded-[4px] border border-[#bb7a35] bg-linear-to-b from-[#f8932a] to-[#fbbf80] text-center leading-[18px] tracking-[0.05px] text-[#444]">Network Overview</div>
                </div>
              </div>
              <Details />
            </div>
          </div>
        </div>
        <div className="flex h-[23px] gap-[16px] border-t border-[#0a4f8d] bg-linear-to-b from-[#eceef0] to-[#c0c9d3] pl-[16px] leading-[17px] tracking-[0.2px] text-black">
          <span>Total Smart Folders: 42</span>
          <span className="tracking-[0.5px]">Total Jobs: 129</span>
        </div>
      </div>
      <Toast />
    </div>
  );
}
